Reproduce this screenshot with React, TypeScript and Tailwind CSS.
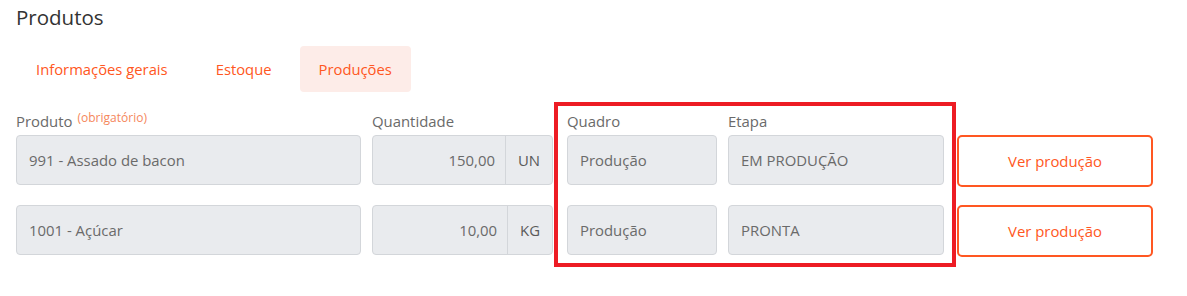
import React from "react";

const font = { fontFamily: '"Open Sans", "Noto Sans", Arial, sans-serif' };

function Input({ w, children, right = false }: { w: string; children: React.ReactNode; right?: boolean }) {
  return (
    <div
      className={`${w} h-[50px] shrink-0 rounded-[4px] border border-[#d3d6da] bg-[#e9ebee] flex items-center px-[12px] text-[14.9px] text-[#6a6a6a] ${right ? "justify-end" : ""}`}
    >
      {children}
    </div>
  );
}

function Qty({ value, unit }: { value: string; unit: string }) {
  return (
    <div className="w-[181px] h-[50px] shrink-0 rounded-[4px] border border-[#d3d6da] bg-[#e9ebee] flex text-[14.9px] text-[#6a6a6a]">
      <div className="flex-1 flex items-center justify-end pr-[10px]">{value}</div>
      <div className="border-l border-[#d3d6da] flex items-center px-[12px] text-[#5a5a5a]">{unit}</div>
    </div>
  );
}

function Btn() {
  return (
    <button className="ml-[13px] w-[196px] h-[52px] shrink-0 rounded-[5px] border-2 border-[#ff5722] bg-white text-[14.9px] text-[#ff5722] flex items-center justify-center">
      Ver produção
    </button>
  );
}

export default function App() {
  return (
    <div className="relative w-[1187px] h-[296px] bg-white overflow-hidden" style={font}>
      <div className="pl-[16px] pt-[3px]">
        <h1 className="text-[20.5px] leading-[28px] text-[#333]">Produtos</h1>
        <div className="mt-[15px] flex gap-2">
          <div className="h-[46px] px-5 flex items-center rounded-[4px] text-[14.8px] text-[#ff5722]">Informações gerais</div>
          <div className="h-[46px] px-5 flex items-center rounded-[4px] text-[14.8px] text-[#ff5722]">Estoque</div>
          <div className="h-[46px] px-[19px] flex items-center rounded-[4px] text-[14.8px] text-[#ff5722] bg-[#fdece8]">Produções</div>
        </div>

        <div className="mt-[19px] flex text-[14.9px] leading-[20px] text-[#6a6a6a]">
          <div className="w-[345px] shrink-0 flex items-start">
            Produto
            <span className="ml-[5px] text-[12px] leading-[14px] text-[#f5875c]">(obrigatório)</span>
          </div>
          <div className="ml-[11px] w-[181px] shrink-0">Quantidade</div>
          <div className="ml-[14px] w-[150px] shrink-0">Quadro</div>
          <div className="ml-[11px] w-[216px] shrink-0">Etapa</div>
        </div>

        <div className="mt-[4px] flex items-start">
          <Input w="w-[345px]">991 - Assado de bacon</Input>
          <div className="ml-[11px]"><Qty value="150,00" unit="UN" /></div>
          <div className="ml-[14px]"><Input w="w-[150px]">Produção</Input></div>
          <div className="ml-[11px]"><Input w="w-[216px]">EM PRODUÇÃO</Input></div>
          <Btn />
        </div>

        <div className="mt-[18px] flex items-start">
          <Input w="w-[345px]">1001 - Açúcar</Input>
          <div className="ml-[11px]"><Qty value="10,00" unit="KG" /></div>
          <div className="ml-[14px]"><Input w="w-[150px]">Produção</Input></div>
          <div className="ml-[11px]"><Input w="w-[216px]">PRONTA</Input></div>
          <Btn />
        </div>
      </div>

      <div className="pointer-events-none absolute left-[554px] top-[102px] w-[402px] h-[165px] border-4 border-[#ed1c24]" />
    </div>
  );
}
